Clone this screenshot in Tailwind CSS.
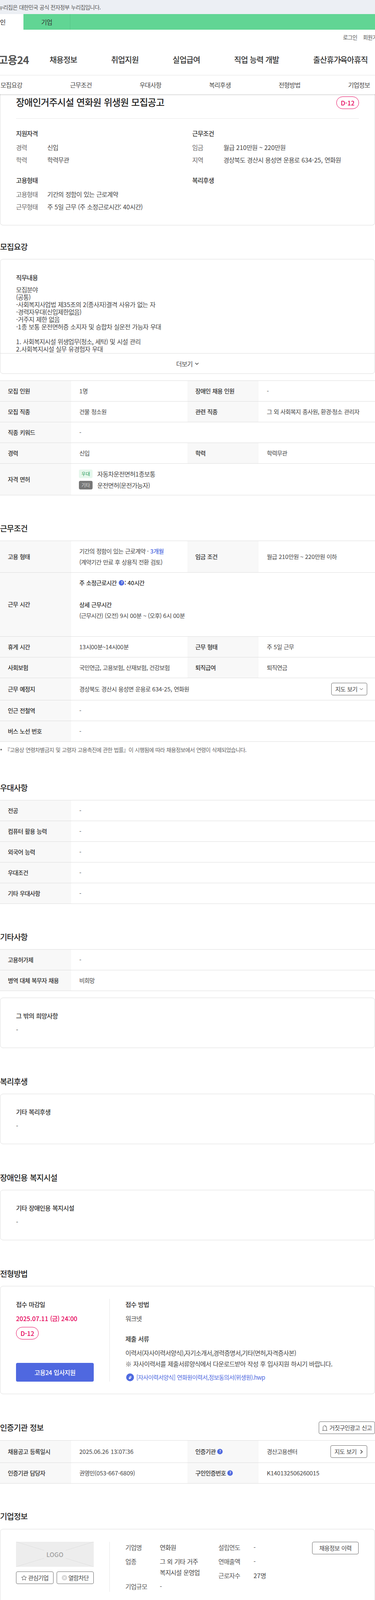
<!doctype html>
<html lang="ko">
<head>
<meta charset="utf-8">
<title>고용24</title>
<script src="https://cdn.jsdelivr.net/npm/@tailwindcss/browser@4"></script>
</head>
<body class="bg-white">
<div class="w-[960px] h-[4108px] overflow-hidden font-['Noto_Sans_CJK_KR',sans-serif] tracking-[-0.05em] [word-spacing:1px] text-[16px] text-[#444]">

  <div class="h-9 bg-[#eceff4] flex items-center text-[14px] text-[#555] whitespace-nowrap"><span class="-ml-[20px]">이 누리집은 대한민국 공식 전자정부 누리집입니다.</span></div>
  <div class="h-10 bg-[#61d594] flex">
    <div class="w-[60px] bg-white flex items-center justify-end pr-[46px] text-[#222] whitespace-nowrap">개인</div>
    <div class="w-[120px] border-r border-[#58c488] flex items-center justify-center text-[#333]">기업</div>
  </div>

  <header class="h-[117px] border-b border-[#e5e5e5]">
    <div class="h-[38px] flex items-center gap-[15px] pl-[878px] text-[14px] text-[#555] whitespace-nowrap"><span>로그인</span><span>회원가입</span></div>
    <div class="flex items-center h-[78px] whitespace-nowrap font-medium text-[20px] text-[#333] [word-spacing:0]">
      <div class="w-[127px] h-10 shrink-0 overflow-hidden relative">
        <span class="absolute right-[53px] top-0 text-[27px] font-bold leading-10 text-[#555]">고용24</span>
      </div>
      <nav class="flex gap-[87px]">
        <span>채용정보</span><span>취업지원</span><span>실업급여</span><span>직업 능력 개발</span><span>출산휴가<span class="-mx-[3px]">·</span>육아휴직</span>
      </nav>
    </div>
  </header>

  <div class="relative z-10 h-[48px] bg-white shadow-[0_2px_3px_rgba(0,0,0,0.15)] flex -ml-[60px] w-[1068px] text-[#444] items-center">
    <span class="w-[178px] text-center">모집요강</span><span class="w-[178px] text-center">근무조건</span><span class="w-[178px] text-center">우대사항</span><span class="w-[178px] text-center">복리후생</span><span class="w-[178px] text-center">전형방법</span><span class="w-[178px] text-center">기업정보</span>
  </div>

  <section class="border border-t-0 border-[#ddd] rounded-b-lg px-10 pt-[6px] h-[336px]">
    <div class="flex justify-between items-start h-[56px] border-b border-[#e8e8e8] box-content">
      <h1 class="text-[24px] font-medium tracking-[-0.04em] text-[#222] leading-[28px]">장애인거주시설 연화원 위생원 모집공고</h1>
      <span class="w-[58px] h-[32px] rounded-[16px] border border-[#e6005a] text-[#e6005a] font-medium tracking-normal flex items-center justify-center text-[16px]">D-12</span>
    </div>
    <div class="grid grid-cols-[451px_1fr] mt-[23px]">
      <div>
        <h3 class="font-medium text-[#333] leading-7 mb-[6px]">지원자격</h3>
        <div class="flex leading-8"><span class="w-[80px] text-[#666]">경력</span><span>신입</span></div>
        <div class="flex leading-8"><span class="w-[80px] text-[#666]">학력</span><span>학력무관</span></div>
      </div>
      <div>
        <h3 class="font-medium text-[#333] leading-7 mb-[6px]">근무조건</h3>
        <div class="flex leading-8"><span class="w-[80px] text-[#666]">임금</span><span>월급 <span class="tracking-normal">210</span>만원 ~ <span class="tracking-normal">220</span>만원</span></div>
        <div class="flex leading-8"><span class="w-[80px] text-[#666]">지역</span><span>경상북도 경산시 용성면 운용로 <span class="tracking-normal">634-25,</span> 연화원</span></div>
      </div>
      <div class="mt-[22px]">
        <h3 class="font-medium text-[#333] leading-7 mb-[6px]">고용형태</h3>
        <div class="flex leading-8"><span class="w-[80px] text-[#666]">고용형태</span><span>기간의 정함이 있는 근로계약</span></div>
        <div class="flex leading-8"><span class="w-[80px] text-[#666]">근무형태</span><span>주 <span class="tracking-normal">5</span>일 근무 (주 소정근로시간: <span class="tracking-normal">40</span>시간)</span></div>
      </div>
      <div class="mt-[22px]">
        <h3 class="font-medium text-[#333] leading-7">복리후생</h3>
      </div>
    </div>
  </section>

  <!-- 모집요강 -->
  <h2 class="mt-[39px] text-[20px] font-medium leading-8 text-[#222] mb-[15px]">모집요강</h2>
  <section class="border border-[#ddd] rounded-lg h-[294px] flex flex-col">
    <div class="h-[240px] overflow-hidden px-10 pt-[36px]">
      <h3 class="font-medium text-[#333] leading-5 mb-3">직무내용</h3>
      <p class="leading-[19px]">모집분야<br>(공통)<br>-사회복지사업법 제<span class="tracking-normal">35</span>조의 <span class="tracking-normal">2</span>(종사자)결격 사유가 없는 자<br>-경력자우대(신입제한없음)<br>-거주지 제한 없음<br>-<span class="tracking-normal">1</span>종 보통 운전면허증 소지자 및 승합차 실운전 가능자 우대<br><br><span class="tracking-normal">1.</span> 사회복지시설 위생업무(청소, 세탁) 및 시설 관리<br><span class="tracking-normal">2.</span>사회복지시설 실무 유경험자 우대<br>3.시설 환경 개선 업무</p>
    </div>
    <div class="flex-1 border-t border-[#ddd] flex items-center justify-center gap-[6px]">더보기
      <svg class="w-[10px] h-[10px]" viewBox="0 0 10 10" fill="none" stroke="#333" stroke-width="1.5"><path d="M1 3l4 4 4-4"/></svg>
    </div>
  </section>

  <div class="mt-[17px] border-t border-[#ddd] text-[15px]">
    <div class="grid grid-cols-[182px_298px_182px_1fr] border-b border-[#ddd] h-[53px]">
      <div class="bg-[#f8f8f8] pl-5 flex items-center font-medium text-[#333]">모집 인원</div><div class="pl-[21px] flex items-center"><span><span class="tracking-normal">1</span>명</span></div>
      <div class="bg-[#f8f8f8] pl-5 flex items-center font-medium text-[#333]">장애인 채용 인원</div><div class="pl-[21px] flex items-center">-</div>
    </div>
    <div class="grid grid-cols-[182px_298px_182px_1fr] border-b border-[#ddd] h-[53px]">
      <div class="bg-[#f8f8f8] pl-5 flex items-center font-medium text-[#333]">모집 직종</div><div class="pl-[21px] flex items-center">건물 청소원</div>
      <div class="bg-[#f8f8f8] pl-5 flex items-center font-medium text-[#333]">관련 직종</div><div class="pl-[21px] flex items-center">그 외 사회복지 종사원, 환경·청소 관리자</div>
    </div>
    <div class="grid grid-cols-[182px_1fr] border-b border-[#ddd] h-[53px]">
      <div class="bg-[#f8f8f8] pl-5 flex items-center font-medium text-[#333]">직종 키워드</div><div class="pl-[21px] flex items-center">-</div>
    </div>
    <div class="grid grid-cols-[182px_298px_182px_1fr] border-b border-[#ddd] h-[53px]">
      <div class="bg-[#f8f8f8] pl-5 flex items-center font-medium text-[#333]">경력</div><div class="pl-[21px] flex items-center">신입</div>
      <div class="bg-[#f8f8f8] pl-5 flex items-center font-medium text-[#333]">학력</div><div class="pl-[21px] flex items-center">학력무관</div>
    </div>
    <div class="grid grid-cols-[182px_1fr] border-b border-[#ddd] h-[81px]">
      <div class="bg-[#f8f8f8] pl-5 flex items-center font-medium text-[#333]">자격 면허</div>
      <div class="pl-[20px] flex flex-col justify-center gap-[7px] text-[16px]">
        <div class="flex items-center gap-3"><span class="w-[35px] h-[22px] rounded bg-[#e6f7ec] text-[#2a9d5c] text-[12px] tracking-normal flex items-center justify-center">우대</span><span class="leading-[22px]">자동차운전면허<span class="tracking-normal">1</span>종보통</span></div>
        <div class="flex items-center gap-3"><span class="w-[35px] h-[22px] rounded bg-[#777] text-[#ddd] text-[12px] tracking-normal flex items-center justify-center">기타</span><span class="leading-[22px]">운전면허(운전가능자)</span></div>
      </div>
    </div>
  </div>

  <!-- 근무조건 -->
  <h2 class="mt-[69px] text-[20px] font-medium leading-8 text-[#222] mb-[15px]">근무조건</h2>
  <div class="border-t border-[#ddd] text-[15px]">
    <div class="grid grid-cols-[182px_298px_182px_1fr] border-b border-[#ddd] h-[81px]">
      <div class="bg-[#f8f8f8] pl-5 flex items-center font-medium text-[#333]">고용 형태</div>
      <div class="pl-[21px] py-3 leading-7">기간의 정함이 있는 근로계약 · <span class="text-[#4f6ae0] font-medium"><span class="tracking-normal">3</span>개월</span><br>(계약기간 만료 후 상용직 전환 검토)</div>
      <div class="bg-[#f8f8f8] pl-5 flex items-center font-medium text-[#333]">임금 조건</div>
      <div class="pl-[21px] flex items-center"><span>월급 <span class="tracking-normal">210</span>만원 ~ <span class="tracking-normal">220</span>만원 이하</span></div>
    </div>
    <div class="grid grid-cols-[182px_1fr] border-b border-[#ddd] h-[164px]">
      <div class="bg-[#f8f8f8] pl-5 flex items-center font-medium text-[#333]">근무 시간</div>
      <div class="pl-[21px] py-3 leading-7">
        <div class="font-medium text-[#333] flex items-center gap-[6px]">주 소정근로시간
          <span class="flex items-center"><span class="w-[14px] h-[14px] rounded-full bg-[#4f6ae0] text-white text-[9px] flex items-center justify-center font-bold">?</span><span>:&nbsp;<span class="tracking-normal">40</span>시간</span></span>
        </div>
        <div class="h-7"></div>
        <div class="font-medium text-[#333]">상세 근무시간</div>
        <div>(근무시간) (오전) <span class="tracking-normal">9</span>시 <span class="tracking-normal">00</span>분 ~ (오후) <span class="tracking-normal">6</span>시 <span class="tracking-normal">00</span>분</div>
      </div>
    </div>
    <div class="grid grid-cols-[182px_298px_182px_1fr] border-b border-[#ddd] h-[53px]">
      <div class="bg-[#f8f8f8] pl-5 flex items-center font-medium text-[#333]">휴게 시간</div><div class="pl-[21px] flex items-center"><span><span class="tracking-normal">13</span>시<span class="tracking-normal">00</span>분~<span class="tracking-normal">14</span>시<span class="tracking-normal">00</span>분</span></div>
      <div class="bg-[#f8f8f8] pl-5 flex items-center font-medium text-[#333]">근무 형태</div><div class="pl-[21px] flex items-center"><span>주 <span class="tracking-normal">5</span>일 근무</span></div>
    </div>
    <div class="grid grid-cols-[182px_298px_182px_1fr] border-b border-[#ddd] h-[53px]">
      <div class="bg-[#f8f8f8] pl-5 flex items-center font-medium text-[#333]">사회보험</div><div class="pl-[21px] flex items-center">국민연금, 고용보험, 산재보험, 건강보험</div>
      <div class="bg-[#f8f8f8] pl-5 flex items-center font-medium text-[#333]">퇴직급여</div><div class="pl-[21px] flex items-center">퇴직연금</div>
    </div>
    <div class="grid grid-cols-[182px_1fr] border-b border-[#ddd] h-[57px]">
      <div class="bg-[#f8f8f8] pl-5 flex items-center font-medium text-[#333]">근무 예정지</div>
      <div class="pl-[21px] pr-5 flex items-center justify-between">
        <span>경상북도 경산시 용성면 운용로 <span class="tracking-normal">634-25,</span> 연화원</span>
        <span class="w-[92px] h-8 border border-[#666] rounded flex items-center justify-center gap-[5px]">지도 보기<svg class="w-[10px] h-[10px]" viewBox="0 0 10 10" fill="none" stroke="#444" stroke-width="1"><path d="M1 3l4 4 4-4"/></svg></span>
      </div>
    </div>
    <div class="grid grid-cols-[182px_1fr] border-b border-[#ddd] h-[53px]">
      <div class="bg-[#f8f8f8] pl-5 flex items-center font-medium text-[#333]">인근 전철역</div><div class="pl-[21px] flex items-center">-</div>
    </div>
    <div class="grid grid-cols-[182px_1fr] border-b border-[#ddd] h-[53px]">
      <div class="bg-[#f8f8f8] pl-5 flex items-center font-medium text-[#333]">버스 노선 번호</div><div class="pl-[21px] flex items-center">-</div>
    </div>
  </div>
  <p class="mt-[10px] flex items-center text-[14px] leading-5 text-[#666]"><span class="w-[4px] h-[4px] rounded-full bg-[#666] ml-[1px] mr-[7px]"></span>『고용상 연령차별금지 및 고령자 고용촉진에 관한 법률』이 시행됨에 따라 채용정보에서 연령이 삭제되었습니다.</p>

  <!-- 우대사항 -->
  <h2 class="mt-[72px] text-[20px] font-medium leading-8 text-[#222] mb-[15px]">우대사항</h2>
  <div class="border-t border-[#ddd] text-[15px]">
    <div class="grid grid-cols-[182px_1fr] border-b border-[#ddd] h-[53px]"><div class="bg-[#f8f8f8] pl-5 flex items-center font-medium text-[#333]">전공</div><div class="pl-[21px] flex items-center">-</div></div>
    <div class="grid grid-cols-[182px_1fr] border-b border-[#ddd] h-[53px]"><div class="bg-[#f8f8f8] pl-5 flex items-center font-medium text-[#333]">컴퓨터 활용 능력</div><div class="pl-[21px] flex items-center">-</div></div>
    <div class="grid grid-cols-[182px_1fr] border-b border-[#ddd] h-[53px]"><div class="bg-[#f8f8f8] pl-5 flex items-center font-medium text-[#333]">외국어 능력</div><div class="pl-[21px] flex items-center">-</div></div>
    <div class="grid grid-cols-[182px_1fr] border-b border-[#ddd] h-[53px]"><div class="bg-[#f8f8f8] pl-5 flex items-center font-medium text-[#333]">우대조건</div><div class="pl-[21px] flex items-center">-</div></div>
    <div class="grid grid-cols-[182px_1fr] border-b border-[#ddd] h-[53px]"><div class="bg-[#f8f8f8] pl-5 flex items-center font-medium text-[#333]">기타 우대사항</div><div class="pl-[21px] flex items-center">-</div></div>
  </div>

  <!-- 기타사항 -->
  <h2 class="mt-[69px] text-[20px] font-medium leading-8 text-[#222] mb-[15px]">기타사항</h2>
  <div class="border-t border-[#ddd] text-[15px]">
    <div class="grid grid-cols-[182px_1fr] border-b border-[#ddd] h-[53px]"><div class="bg-[#f8f8f8] pl-5 flex items-center font-medium text-[#333]">고용허가제</div><div class="pl-[21px] flex items-center">-</div></div>
    <div class="grid grid-cols-[182px_1fr] border-b border-[#ddd] h-[53px]"><div class="bg-[#f8f8f8] pl-5 flex items-center font-medium text-[#333]">병역 대체 복무자 채용</div><div class="pl-[21px] flex items-center">비희망</div></div>
  </div>
  <section class="mt-[17px] border border-[#ddd] rounded-lg h-[129px] px-10 pt-[31px]">
    <h3 class="font-medium text-[#333] leading-7">그 밖의 희망사항</h3>
    <p class="mt-2 leading-7">-</p>
  </section>

  <!-- 복리후생 -->
  <h2 class="mt-[70px] text-[20px] font-medium leading-8 text-[#222] mb-[15px]">복리후생</h2>
  <section class="border border-[#ddd] rounded-lg h-[129px] px-10 pt-[31px]">
    <h3 class="font-medium text-[#333] leading-7">기타 복리후생</h3>
    <p class="mt-2 leading-7">-</p>
  </section>

  <h2 class="mt-[70px] text-[20px] font-medium leading-8 text-[#222] mb-[15px]">장애인용 복지시설</h2>
  <section class="border border-[#ddd] rounded-lg h-[129px] px-10 pt-[31px]">
    <h3 class="font-medium text-[#333] leading-7">기타 장애인용 복지시설</h3>
    <p class="mt-2 leading-7">-</p>
  </section>

  <!-- 전형방법 -->
  <h2 class="mt-[70px] text-[20px] font-medium leading-8 text-[#222] mb-[15px]">전형방법</h2>
  <section class="border border-[#ddd] rounded-lg h-[277px] pl-10 pt-[32px] flex">
    <div class="w-[199px] h-[212px] flex flex-col shrink-0">
      <h3 class="font-medium text-[#333] leading-7">접수 마감일</h3>
      <p class="mt-2 leading-7 font-medium text-[#e6005a]"><span class="tracking-normal">2025.07.11</span> (금) <span class="tracking-normal">24:00</span></p>
      <span class="mt-[8px] w-[58px] h-[32px] rounded-[16px] border border-[#e6005a] text-[#e6005a] font-medium tracking-normal flex items-center justify-center">D-12</span>
      <a class="mt-auto h-12 rounded bg-[#4f68e0] text-white font-medium flex items-center justify-center">고용24 입사지원</a>
    </div>
    <div class="ml-10 pl-10 h-[212px] border-l border-[#e5e5e5] grow">
      <h3 class="font-medium text-[#333] leading-7">접수 방법</h3>
      <p class="mt-2 leading-7">워크넷</p>
      <h3 class="mt-6 font-medium text-[#333] leading-7">제출 서류</h3>
      <p class="mt-2 leading-7">이력서(자사이력서양식),자기소개서,경력증명서,기타(면허,자격증사본)<br>※ 자사이력서를 제출서류양식에서 다운로드받아 작성 후 입사지원 하시기 바랍니다.</p>
      <p class="mt-[7px] flex items-center gap-[6px] leading-7 text-[#4f6ae0] text-[15px]">
        <svg class="w-[20px] h-[20px] ml-[2px]" viewBox="0 0 20 20"><circle cx="10" cy="10" r="10" fill="#4f6ae0"/><path d="M7.2 13.5c1.8 1 3.6-.5 4.8-2.6 1-1.8.9-3.3-.1-3.6-1.3-.4-3.1 1.4-4 3.1-.6 1.1-.3 2.1.6 2.1 1 0 2.2-1 2.9-2" fill="none" stroke="#fff" stroke-width="1.4" stroke-linecap="round"/></svg>
        [자사이력서양식] 연화원이력서,정보동의서(위생원).hwp
      </p>
    </div>
  </section>

  <!-- 인증기관 정보 -->
  <div class="mt-[70px] mb-[16px] flex justify-between items-center h-8">
    <h2 class="text-[20px] font-medium leading-8 text-[#222]">인증기관 정보</h2>
    <span class="w-[144px] h-8 border border-[#666] rounded flex items-center justify-center gap-1 text-[15px]">
      <svg class="w-[15px] h-[15px]" viewBox="0 0 15 15" fill="none" stroke="#444" stroke-width="1"><path d="M1 14h13M3 14V6a4.5 4.5 0 0 1 9 0v8"/><path d="M8 3.2a2.6 2.6 0 0 1 2 2.3"/></svg>거짓구인광고 신고
    </span>
  </div>
  <div class="border-t border-[#ddd] text-[15px]">
    <div class="grid grid-cols-[182px_298px_182px_1fr] border-b border-[#ddd] h-[57px]">
      <div class="bg-[#f8f8f8] pl-5 flex items-center font-medium text-[#333]">채용공고 등록일시</div><div class="pl-[21px] flex items-center tracking-normal">2025.06.26 13:07:36</div>
      <div class="bg-[#f8f8f8] pl-5 flex items-center font-medium text-[#333] gap-1">인증기관<span class="w-[14px] h-[14px] rounded-full bg-[#4f6ae0] text-white text-[9px] flex items-center justify-center font-bold">?</span></div>
      <div class="pl-[21px] pr-5 flex items-center justify-between"><span>경산고용센터</span>
        <span class="w-[94px] h-8 border border-[#666] rounded flex items-center justify-center gap-2">지도 보기<svg class="w-[9px] h-[11px]" viewBox="0 0 9 11" fill="none" stroke="#333" stroke-width="1.6"><path d="M2 1l4.5 4.5L2 10"/></svg></span>
      </div>
    </div>
    <div class="grid grid-cols-[182px_298px_182px_1fr] border-b border-[#ddd] h-[53px]">
      <div class="bg-[#f8f8f8] pl-5 flex items-center font-medium text-[#333]">인증기관 담당자</div><div class="pl-[21px] flex items-center"><span>권영민<span class="tracking-normal">(053-667-6809)</span></span></div>
      <div class="bg-[#f8f8f8] pl-5 flex items-center font-medium text-[#333] gap-1">구인인증번호<span class="w-[14px] h-[14px] rounded-full bg-[#4f6ae0] text-white text-[9px] flex items-center justify-center font-bold">?</span></div>
      <div class="pl-[21px] flex items-center tracking-normal">K140132506260015</div>
    </div>
  </div>

  <!-- 기업정보 -->
  <h2 class="mt-[68px] text-[20px] font-medium leading-8 text-[#222] mb-[16px]">기업정보</h2>
  <section class="border border-[#ddd] rounded-t-lg h-[194px] pl-10 pt-[32px] flex">
    <div class="w-[199px] shrink-0">
      <div class="relative h-[64px] bg-[#ededed] flex items-center justify-center">
        <svg class="absolute inset-0 w-full h-full" viewBox="0 0 199 64" preserveAspectRatio="none" fill="none" stroke="#dedede" stroke-width="1"><path d="M0 0L72 22M199 0L127 22M0 64L72 42M199 64L127 42"/></svg>
        <span class="relative text-[16px] font-medium text-[#a0a0a0] tracking-normal">LOGO</span>
      </div>
      <div class="mt-3 flex justify-between text-[15px]">
        <span class="w-[96px] h-8 border border-[#666] rounded flex items-center justify-center gap-[3px]">
          <svg class="w-[15px] h-[15px]" viewBox="0 0 15 15" fill="none" stroke="#444" stroke-width="1"><path d="M7.5 1.2l1.9 4 4.4.5-3.2 3 .8 4.4-3.9-2.2-3.9 2.2.8-4.4-3.2-3 4.4-.5z"/></svg>관심기업
        </span>
        <span class="w-[95px] h-8 border border-[#666] rounded flex items-center justify-center gap-[3px]">
          <svg class="w-[14px] h-[14px]" viewBox="0 0 14 14"><circle cx="7" cy="7" r="7" fill="#d8d8d8"/><path d="M4.5 4.5l5 5M9.5 4.5l-5 5" stroke="#fff" stroke-width="1.4"/></svg>열람차단
        </span>
      </div>
    </div>
    <div class="ml-10 pl-10 h-[128px] border-l border-[#e5e5e5] flex grow leading-7">
      <div class="w-[238px] shrink-0">
        <div class="flex"><span class="w-[88px] shrink-0 text-[#555]">기업명</span><span>연화원</span></div>
        <div class="flex mt-2"><span class="w-[88px] shrink-0 text-[#555]">업종</span><span class="w-[110px]">그 외 기타 거주 복지시설 운영업</span></div>
        <div class="flex mt-2"><span class="w-[88px] shrink-0 text-[#555]">기업규모</span><span>-</span></div>
      </div>
      <div class="w-[240px] shrink-0">
        <div class="flex"><span class="w-[90px] text-[#555]">설립연도</span><span>-</span></div>
        <div class="flex mt-2"><span class="w-[90px] text-[#555]">연매출액</span><span>-</span></div>
        <div class="flex mt-2"><span class="w-[90px] text-[#555]">근로자수</span><span><span class="tracking-normal">27</span>명</span></div>
      </div>
      <span class="w-[119px] h-8 border border-[#666] rounded flex items-center justify-center text-[15px]">채용정보 이력</span>
    </div>
  </section>
</div>
</body>
</html>
